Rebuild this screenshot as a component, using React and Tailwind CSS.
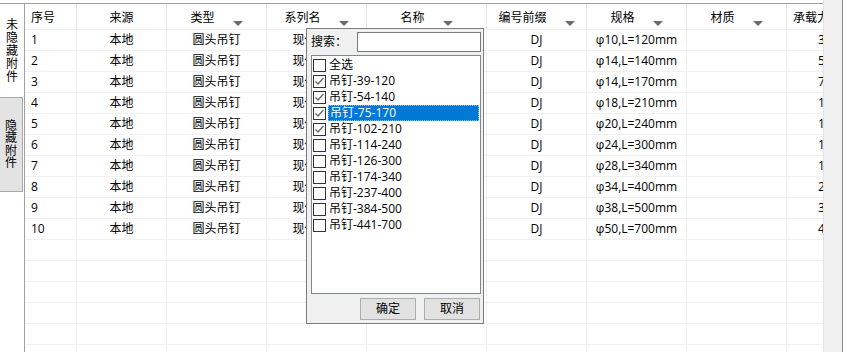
import React from "react";

const FONT = { fontFamily: '"Open Sans", "Noto Sans CJK SC", sans-serif' };

const cols = [
  { w: "w-[52px]", title: "序号", align: "left" },
  { w: "w-[90px]", title: "来源", align: "center" },
  { w: "w-[100px]", title: "类型", align: "center", arrow: true },
  { w: "w-[100px]", title: "系列名", align: "center", arrow: true },
  { w: "w-[120px]", title: "名称", align: "center", arrow: true },
  { w: "w-[100px]", title: "编号前缀", align: "center", arrow: true },
  { w: "w-[100px]", title: "规格", align: "center", arrow: true },
  { w: "w-[100px]", title: "材质", align: "center", arrow: true },
];

const specs = [
  ["10", "120", "39-120", "35"],
  ["14", "140", "54-140", "50"],
  ["14", "170", "75-170", "75"],
  ["18", "210", "102-210", "10"],
  ["20", "240", "114-240", "12"],
  ["24", "300", "126-300", "15"],
  ["28", "340", "174-340", "18"],
  ["34", "400", "237-400", "25"],
  ["38", "500", "384-500", "30"],
  ["50", "700", "441-700", "40"],
];

const rows = specs.map((s, i) => [
  String(i + 1),
  "本地",
  "圆头吊钉",
  "现代吊钉",
  "吊钉-" + s[2],
  "DJ",
  "φ" + s[0] + ",L=" + s[1] + "mm",
  "",
  s[3],
]);

const listItems = [
  { t: "全选", c: false },
  ...specs.map((s, i) => ({ t: "吊钉-" + s[2], c: i < 4, sel: i === 2 })),
];

function Arrow() {
  return (
    <svg width="10" height="5" viewBox="0 0 10 5" className="ml-[18px] mt-[12px] shrink-0">
      <polygon points="0,0 10,0 5,5" fill="#6b6b6b" />
    </svg>
  );
}

function Check({ checked }) {
  return (
    <div className="w-[13px] h-[13px] border border-[#333333] bg-white shrink-0 flex items-center justify-center">
      {checked && (
        <svg width="11" height="11" viewBox="0 0 11 11">
          <polyline points="1.5,5.5 4,8 9.5,2" fill="none" stroke="#666666" strokeWidth="1.3" />
        </svg>
      )}
    </div>
  );
}

export default function App() {
  const empty = Array.from({ length: 6 });
  return (
    <div className="w-[856px] h-[352px] bg-white relative overflow-hidden flex text-[12px] text-black" style={FONT}>
      {/* main */}
      <div className="w-[823px] h-full pt-[3px] flex flex-col">
        <div className="flex-1 flex border-t border-[#a0a0a0] min-h-0">
          {/* tab strip */}
          <div className="w-[24px] flex flex-col">
            <div className="h-[93px] w-[24px] flex flex-col items-center justify-center leading-[13px] bg-white">
              {"未隐藏附件".split("").map((c, i) => (
                <span key={i}>{c}</span>
              ))}
            </div>
            <div className="h-[95px] w-[23px] bg-[#e3e3e3] border-t border-r border-b border-[#a9a9a9] flex flex-col items-center justify-center leading-[12.5px]">
              {"隐藏附件".split("").map((c, i) => (
                <span key={i}>{c}</span>
              ))}
            </div>
            <div className="flex-1" />
          </div>
          {/* table */}
          <div className="flex-1 border-l border-[#a0a0a0] overflow-hidden flex flex-col">
            {/* header */}
            <div className="h-[26px] flex shrink-0 border-b border-[#f0f0f0]">
              {cols.map((c, i) => (
                <div
                  key={i}
                  className={`${c.w} shrink-0 h-full flex items-center pt-[2px] border-r border-[#e6e6e6] ${
                    c.align === "left" ? "justify-start pl-[6px]" : "justify-center"
                  }`}
                >
                  <span className="leading-[14px]">{c.title}</span>
                  {c.arrow && <Arrow />}
                </div>
              ))}
              <div className="flex-1 h-full flex items-center pt-[2px] pl-[6px] whitespace-nowrap">
                <span className="leading-[14px]">承载力</span>
              </div>
            </div>
            {rows.map((r, ri) => (
              <div key={ri} className="h-[21px] flex shrink-0 border-b border-[#f0f0f0]">
                {cols.map((c, i) => (
                  <div
                    key={i}
                    className={`${c.w} shrink-0 h-full flex items-center border-r border-[#f0f0f0] whitespace-nowrap overflow-hidden ${
                      c.align === "left" ? "justify-start pl-[6px]" : "justify-center"
                    }`}
                  >
                    <span className="leading-[14px]">{r[i]}</span>
                  </div>
                ))}
                <div className="flex-1 h-full flex items-center pl-[31px] whitespace-nowrap overflow-hidden">
                  <span className="leading-[14px]">{r[8]}</span>
                </div>
              </div>
            ))}
            {empty.map((_, ri) => (
              <div key={ri} className="h-[21px] flex shrink-0 border-b border-[#f0f0f0]">
                {cols.map((c, i) => (
                  <div key={i} className={`${c.w} shrink-0 h-full border-r border-[#f0f0f0]`} />
                ))}
                <div className="flex-1" />
              </div>
            ))}
          </div>
        </div>
      </div>
      {/* right gray bar */}
      <div className="w-[20px] h-full bg-[#f0f0f0] border-l border-[#e3e3e3] border-r border-r-[#8a8a8a]" />
      <div className="flex-1 h-full bg-white" />

      {/* filter popup */}
      <div className="absolute left-[306px] top-[28px] w-[178px] h-[296px] border border-[#7a7a7a] bg-[#f0f0f0] flex flex-col">
        <div className="flex items-center mt-[3px] pl-[4px] pr-[2px]">
          <span className="w-[46px] leading-[14px]">搜索：</span>
          <div className="w-[124px] h-[20px] border border-[#7a7a7a] bg-white" />
        </div>
        <div className="ml-[4px] mt-[3px] w-[170px] h-[239px] border border-[#828790] bg-white pt-[1px] pl-[1px] pr-[1px] flex flex-col">
          {listItems.map((it, i) => (
            <div key={i} className="h-[16px] flex items-center">
              <Check checked={it.c} />
              <div
                className={`ml-[2px] flex-1 h-[16px] flex items-center pl-[1px] whitespace-nowrap ${
                  it.sel ? "bg-[#0078d7] text-white border border-dotted border-[#8fc2ef]" : ""
                }`}
              >
                <span className="leading-[14px]">{it.t}</span>
              </div>
            </div>
          ))}
        </div>
        <div className="mt-[4px] flex justify-end gap-[8px] pr-[3px]">
          <div className="w-[56px] h-[22px] border border-[#adadad] bg-[#e1e1e1] flex items-center justify-center leading-[14px]">
            确定
          </div>
          <div className="w-[56px] h-[22px] border border-[#adadad] bg-[#e1e1e1] flex items-center justify-center leading-[14px]">
            取消
          </div>
        </div>
      </div>
    </div>
  );
}
